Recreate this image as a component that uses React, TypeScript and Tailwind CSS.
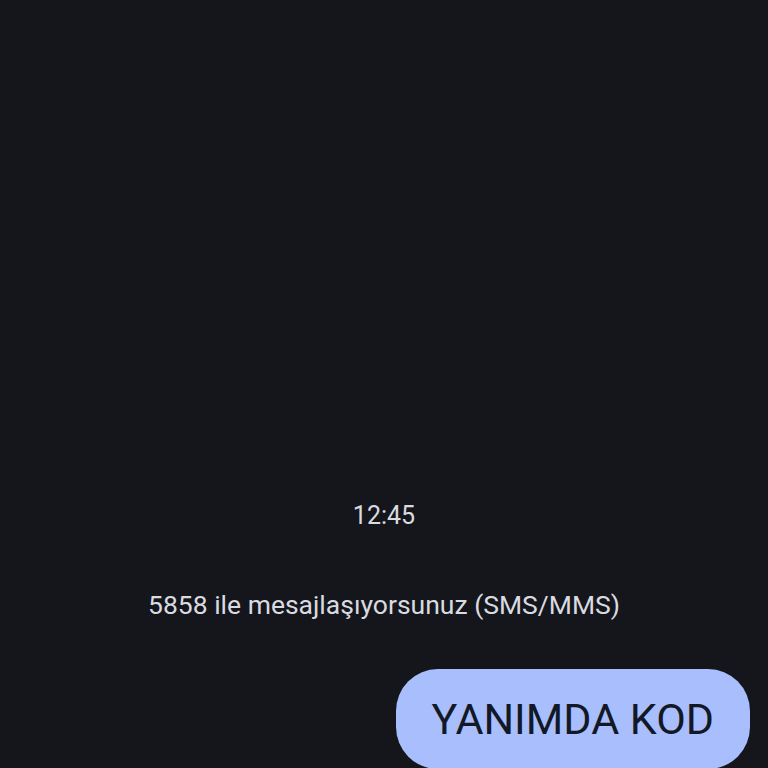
export default function App() {
  return (
    <div
      className="h-[768px] w-full overflow-hidden bg-[#14161b] flex flex-col pt-[500px]"
      style={{ fontFamily: 'Roboto, "Noto Sans", sans-serif' }}
    >
      <div className="text-center text-[25px] leading-[32px] text-[#d9dbe0]">12:45</div>
      <div className="mt-[55px] text-center text-[26.5px] leading-[36px] text-[#d9dbe0]">
        5858 ile mesajlaşıyorsunuz (SMS/MMS)
      </div>
      <div className="mt-[46px] flex justify-end pr-[18px]">
        <div className="rounded-[42px] bg-[#a8befd] px-[36px] py-[24px] text-[43px] leading-[52px] text-[#121826]">
          YANIMDA KOD
        </div>
      </div>
    </div>
  );
}
